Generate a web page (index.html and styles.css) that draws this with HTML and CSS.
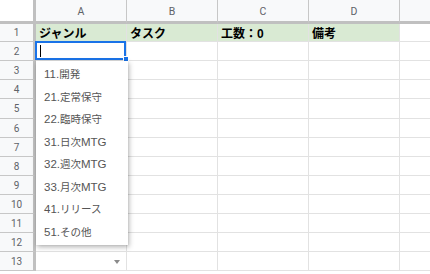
FILE: index.html
```html
<!DOCTYPE html>
<html lang="ja">
<head>
<meta charset="utf-8">
<link rel="stylesheet" href="styles.css">
</head>
<body>
<div class="sheet">
  <div class="grid">
    <div class="corner"></div>
    <div class="colhead">A</div>
    <div class="colhead">B</div>
    <div class="colhead">C</div>
    <div class="colhead">D</div>
    <div class="colhead last"></div>

    <div class="rowhead">1</div>
    <div class="cell title">ジャンル</div>
    <div class="cell title">タスク</div>
    <div class="cell title">工数：0</div>
    <div class="cell title">備考</div>
    <div class="cell"></div>

    <div class="rowhead">2</div>
    <div class="cell selected"><span class="caret"></span><span class="handle"></span></div>
    <div class="cell"></div><div class="cell"></div><div class="cell"></div><div class="cell"></div>

    <div class="rowhead">3</div>
    <div class="cell"></div><div class="cell"></div><div class="cell"></div><div class="cell"></div><div class="cell"></div>
    <div class="rowhead">4</div>
    <div class="cell"></div><div class="cell"></div><div class="cell"></div><div class="cell"></div><div class="cell"></div>
    <div class="rowhead">5</div>
    <div class="cell"></div><div class="cell"></div><div class="cell"></div><div class="cell"></div><div class="cell"></div>
    <div class="rowhead">6</div>
    <div class="cell"></div><div class="cell"></div><div class="cell"></div><div class="cell"></div><div class="cell"></div>
    <div class="rowhead">7</div>
    <div class="cell"></div><div class="cell"></div><div class="cell"></div><div class="cell"></div><div class="cell"></div>
    <div class="rowhead">8</div>
    <div class="cell"></div><div class="cell"></div><div class="cell"></div><div class="cell"></div><div class="cell"></div>
    <div class="rowhead">9</div>
    <div class="cell"></div><div class="cell"></div><div class="cell"></div><div class="cell"></div><div class="cell"></div>
    <div class="rowhead">10</div>
    <div class="cell"></div><div class="cell"></div><div class="cell"></div><div class="cell"></div><div class="cell"></div>
    <div class="rowhead">11</div>
    <div class="cell"></div><div class="cell"></div><div class="cell"></div><div class="cell"></div><div class="cell"></div>
    <div class="rowhead">12</div>
    <div class="cell arrowcell"><span class="arrow"></span></div><div class="cell"></div><div class="cell"></div><div class="cell"></div><div class="cell"></div>
    <div class="rowhead">13</div>
    <div class="cell arrowcell"><span class="arrow"></span></div><div class="cell"></div><div class="cell"></div><div class="cell"></div><div class="cell"></div>
  </div>

  <ul class="dropdown">
    <li>11.<span class="ja">開発</span></li>
    <li>21.<span class="ja">定常保守</span></li>
    <li>22.<span class="ja">臨時保守</span></li>
    <li>31.<span class="ja">日次</span>MTG</li>
    <li>32.<span class="ja">週次</span>MTG</li>
    <li>33.<span class="ja">月次</span>MTG</li>
    <li>41.<span class="ja">リリース</span></li>
    <li>51.<span class="ja">その他</span></li>
  </ul>
</div>
</body>
</html>
```

FILE: styles.css
```css
html, body {
  margin: 0;
  padding: 0;
  background: #fff;
}

body {
  width: 430px;
  height: 274px;
  overflow: hidden;
  font-family: "Liberation Sans", Arial, "Noto Sans CJK JP", sans-serif;
}

.sheet {
  position: relative;
  width: 430px;
  height: 274px;
  overflow: hidden;
}

.grid {
  display: grid;
  grid-template-columns: 36px 91px 91px 91px 91px 40px;
  grid-template-rows: 24px 18px 19px 19px 19px 20px 19px 19px 19px 19px 19px 19px 19px 19px;
}

.grid > div {
  box-sizing: border-box;
}

.corner {
  background: #fff;
  border-right: 3px solid #c0c0c0;
  border-bottom: 3px solid #c0c0c0;
}

.colhead {
  background: #f8f9fa;
  border-right: 1px solid #c7c7c7;
  border-bottom: 3px solid #c0c0c0;
  color: #5f6368;
  font-family: Roboto, "Liberation Sans", sans-serif;
  font-size: 10.5px;
  display: flex;
  align-items: center;
  justify-content: center;
  padding-top: 1px;
}

.colhead.last {
  border-right: none;
}

.rowhead {
  background: #f8f9fa;
  border-right: 3px solid #c0c0c0;
  border-bottom: 1px solid #c7c7c7;
  color: #5f6368;
  font-family: Roboto, "Liberation Sans", sans-serif;
  font-size: 10px;
  display: flex;
  align-items: center;
  justify-content: center;
}

.cell {
  border-right: 1px solid #e2e2e2;
  border-bottom: 1px solid #e2e2e2;
  position: relative;
}

.title {
  background: #d9ead3;
  font-weight: bold;
  font-size: 12px;
  color: #000;
  padding-left: 3px;
  display: flex;
  align-items: center;
  white-space: nowrap;
  font-family: "Liberation Sans", Arial, "Noto Sans CJK JP", sans-serif;
}

.selected::after {
  content: "";
  position: absolute;
  top: -1px;
  left: -1px;
  right: 0;
  bottom: 0;
  border: 2px solid #1a73e8;
}

.caret {
  position: absolute;
  left: 4px;
  top: 3px;
  width: 1px;
  height: 12px;
  background: #000;
}

.handle {
  position: absolute;
  right: -3px;
  bottom: -2px;
  width: 4px;
  height: 4px;
  background: #1a73e8;
  border: 1px solid #fff;
  z-index: 2;
}

.arrow {
  position: absolute;
  right: 6px;
  top: 8px;
  width: 0;
  height: 0;
  border-left: 3.5px solid transparent;
  border-right: 3.5px solid transparent;
  border-top: 4px solid #8a8a8a;
}

.dropdown {
  position: absolute;
  left: 36px;
  top: 61px;
  width: 92px;
  margin: 0;
  padding: 2px 0;
  list-style: none;
  background: #fff;
  box-shadow: 1px 2px 5px rgba(0, 0, 0, 0.3), 0 0 1px rgba(0, 0, 0, 0.15);
  z-index: 3;
}

.dropdown li {
  height: 22.5px;
  line-height: 22.5px;
  padding-left: 8px;
  font-size: 11.5px;
  color: #555;
  white-space: nowrap;
  font-family: "Liberation Sans", Arial, "Noto Sans CJK JP", sans-serif;
}

.dropdown .ja {
  font-size: 10.5px;
}
```
